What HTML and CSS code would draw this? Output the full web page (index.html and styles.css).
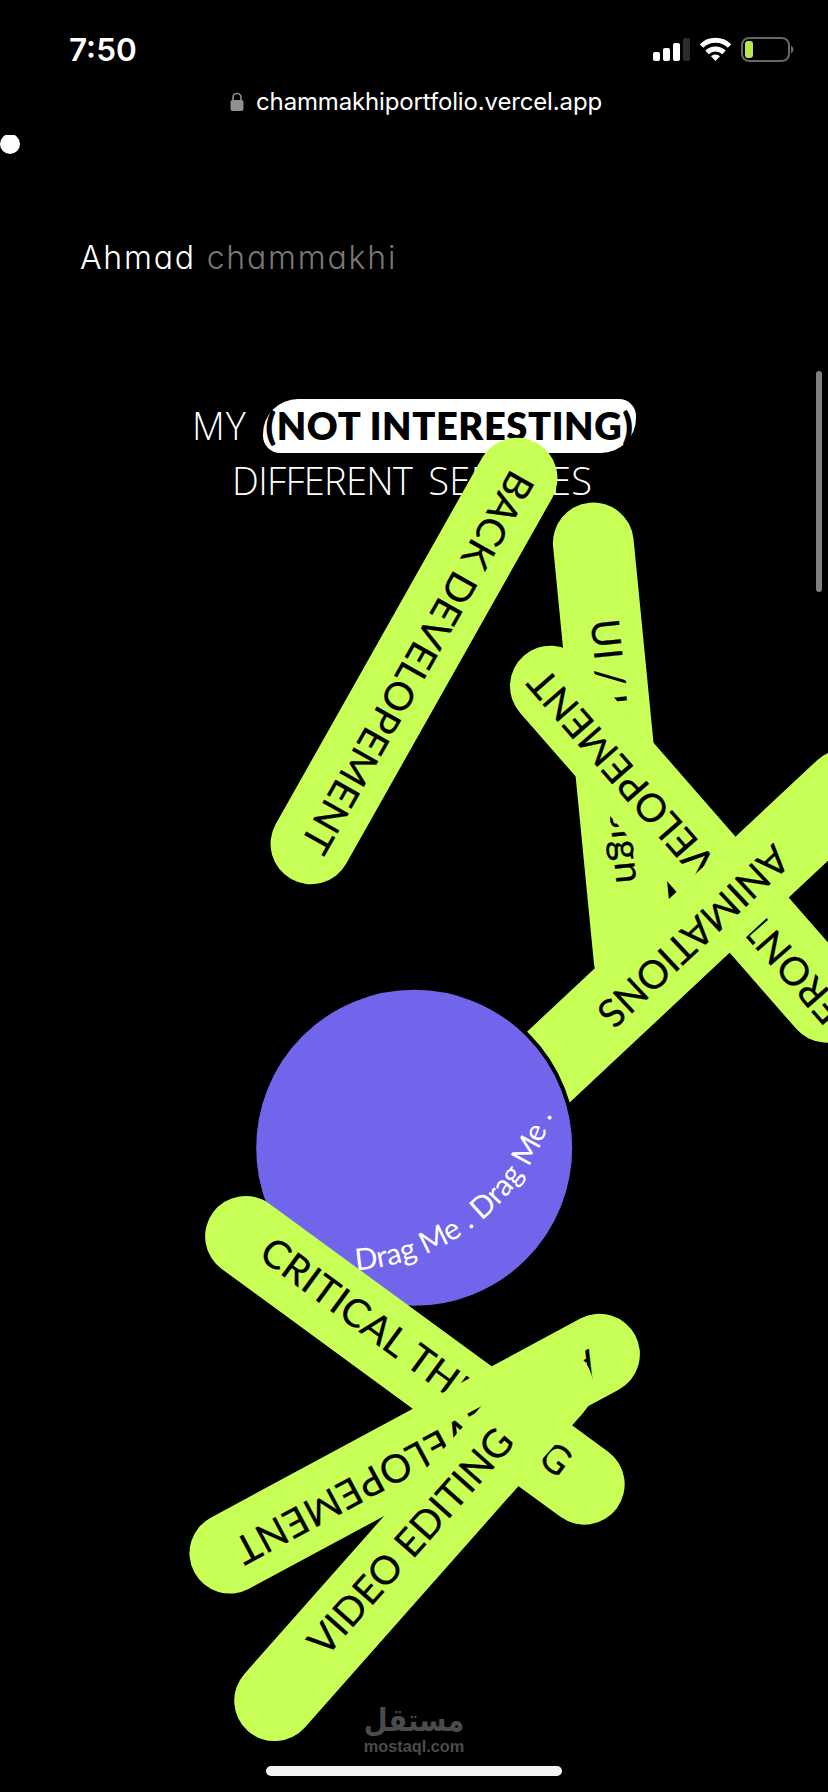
FILE: index.html
```
<!DOCTYPE html>
<html lang="en">
<head>
  <meta charset="UTF-8" />
  <meta name="viewport" content="width=device-width, initial-scale=1" />
  <title>Ahmad chammakhi</title>
  <link rel="stylesheet" href="styles.css">
</head>
<body>
  <div class="status-bar">
    <span class="clock">7:50</span>
    <svg class="status-icons" width="144" height="28" viewBox="0 0 144 28">
      <g fill="#fff">
        <rect x="3" y="16" width="7" height="9" rx="2" />
        <rect x="13" y="12" width="7" height="13" rx="2" />
        <rect x="23" y="7" width="7" height="18" rx="2" />
        <rect x="33" y="2" width="7" height="23" rx="2" fill="#2c2c30" />
      </g>
      <g fill="none" stroke="#fff" stroke-width="5">
        <path d="M51.500 10 A20 20 0 0 1 79.500 10" />
        <path d="M57 16.300 A12.500 12.500 0 0 1 74 16.300" />
      </g>
      <path fill="#fff" d="M65.500 25 L61 20.300 A6.500 6.500 0 0 1 70 20.300 Z" />
      <rect x="92" y="2" width="47" height="23" rx="7" fill="none" stroke="#666" stroke-width="2" />
      <rect x="95" y="5" width="8" height="17" rx="3" fill="#b9e64a" />
      <path fill="#666" d="M141 9.500 q5 4 0 8 Z" />
    </svg>
  </div>

  <div class="url-bar">
    <svg width="14" height="20" viewBox="0 0 14 20">
      <rect x="0.500" y="8" width="13" height="11" rx="2" fill="#8e8e93" />
      <path d="M3 9 V5.500 a4 4 0 0 1 8 0 V9" fill="none" stroke="#8e8e93" stroke-width="1.600" />
    </svg>
    <span>chammakhiportfolio.vercel.app</span>
  </div>

  <div class="cursor"></div>
  <div class="scrollbar"></div>

  <header class="brand">Ahmad <span>chammakhi</span></header>

  <h1 class="title">
    <span class="row"><span class="my">MY</span><span class="blob">(NOT INTERESTING)</span></span>
    <span class="row second"><span>DIFFERENT</span><span class="services">SERVICES</span></span>
  </h1>

  <!-- draggable pills -->
  <svg class="playground" width="828" height="1792" viewBox="0 0 828 1792">
    <defs>
      <rect id="pill" x="-250.300" y="-40.400" width="500.600" height="80.800" rx="40.400" />
      <path id="arc" d="M356 1270.200 A220 220 0 0 0 561 1067" />
    </defs>
    <g class="pill" transform="translate(414 661) rotate(119.4)">
      <use href="#pill" />
      <text x="-216" y="10" textLength="431">BACK DEVELOPEMENT</text>
    </g>
    <g class="pill" transform="translate(613.8 751.8) rotate(84.4)">
      <use href="#pill" />
      <text class="tight" x="-133" y="10" textLength="265">UI / UX Design</text>
    </g>
    <g class="pill" transform="translate(688.5 844.2) rotate(228.85)">
      <use href="#pill" />
      <text x="-228" y="10" textLength="456">FRONT DEVELOPEMENT</text>
    </g>
    <g class="pill" transform="translate(691.3 933.3) rotate(136.9)">
      <use href="#pill" />
      <text x="-122" y="10" textLength="245">ANIMATIONS</text>
    </g>

    <circle class="ball" cx="414.2" cy="1147.8" r="160" />
    <text class="drag"><textPath href="#arc" textLength="266">Drag Me . Drag Me .</textPath></text>

    <g class="pill" transform="translate(414.9 1360.3) rotate(36.2)">
      <use href="#pill" />
      <text x="-188" y="10" textLength="374">CRITICAL THINKING</text>
    </g>
    <g class="pill" transform="translate(414.7 1453.7) rotate(151.7)">
      <use href="#pill" />
      <text x="-203" y="10" textLength="406">APP DEVELOPEMENT</text>
    </g>
    <g class="pill" transform="translate(413.7 1543.5) rotate(-48.5)">
      <use href="#pill" />
      <text x="-144" y="10" textLength="287">VIDEO EDITING</text>
    </g>
  </svg>

  <footer class="watermark">
    <div class="ar" lang="ar">مستقل</div>
    <div class="en">mostaql.com</div>
  </footer>
  <div class="home-bar"></div>
</body>
</html>
```
FILE: styles.css
```
* {
  box-sizing: border-box;
}

body {
  margin: 0;
  position: relative;
  width: 828px;
  height: 1792px;
  overflow: hidden;
  background: #000;
  color: #fff;
  font-family: Inter, sans-serif;
  display: flex;
  flex-direction: column;
}

.status-bar {
  height: 75px;
  padding: 24px 34px 0 69px;
  display: flex;
  justify-content: space-between;
  align-items: center;
}

.clock {
  font-size: 31.5px;
  font-weight: 600;
}

.url-bar {
  height: 53px;
  display: flex;
  justify-content: center;
  align-items: center;
  gap: 12px;
  font-size: 24px;
  letter-spacing: -0.15px;
  padding-left: 4px;
}

.cursor {
  position: absolute;
  left: 0;
  top: 134px;
  width: 20px;
  height: 20px;
  border-radius: 50%;
  background: #fff;
  clip-path: inset(1px 0 0 0);
}

.scrollbar {
  position: absolute;
  left: 816px;
  top: 371px;
  width: 6px;
  height: 221px;
  border-radius: 3px;
  background: #808080;
}

.brand {
  margin-top: 108px;
  padding-left: 80px;
  height: 44px;
  line-height: 44px;
  font-size: 32px;
  font-weight: 300;
  letter-spacing: 1.8px;
  font-feature-settings: "cv11";
}

.brand span {
  color: #777;
}

.title {
  margin: 119px 0 0;
  font-family: "Open Sans", sans-serif;
  font-size: 38px;
  font-weight: 300;
}

.row {
  display: flex;
  height: 54px;
  line-height: 54px;
  padding-left: 192px;
}

.my {
  width: 71px;
  line-height: 53px;
  letter-spacing: 1px;
}

.blob {
  width: 373px;
  border-radius: 35px 17px 35px 17px;
  background: #fff;
  color: #000;
  font-family: Lato, sans-serif;
  font-weight: 800;
  letter-spacing: 0.6px;
  line-height: 53px;
  text-align: center;
}

.second {
  padding-left: 232px;
  gap: 16px;
  letter-spacing: -0.7px;
}

.services {
  letter-spacing: 0.4px;
}

.playground {
  position: absolute;
  left: 0;
  top: 0;
}

.pill {
  fill: #c8ff57;
}

.pill text {
  fill: #000;
  stroke: #000;
  stroke-width: 0.3px;
  stroke-linejoin: round;
  font-family: Lato, sans-serif;
  font-size: 39px;
}

.pill .tight {
  word-spacing: -4px;
}

.ball {
  fill: #7165eb;
  stroke: #000;
  stroke-width: 4px;
}

.drag {
  fill: #fff;
  font-family: Lato, sans-serif;
  font-size: 30px;
}

.watermark {
  margin-top: auto;
  width: 828px;
  display: flex;
  flex-direction: column;
  align-items: center;
  color: #4b4b4d;
  font-family: "Liberation Sans", sans-serif;
  font-weight: bold;
}

.ar {
  height: 32px;
  line-height: 32px;
  font-family: "DejaVu Sans", sans-serif;
  font-size: 27.5px;
  transform: scaleY(1.15);
}

.en {
  height: 20px;
  line-height: 20px;
  font-size: 16.3px;
}

.home-bar {
  width: 296px;
  height: 10px;
  margin: 10px auto 16px;
  border-radius: 5px;
  background: #f4f4f4;
}
```
